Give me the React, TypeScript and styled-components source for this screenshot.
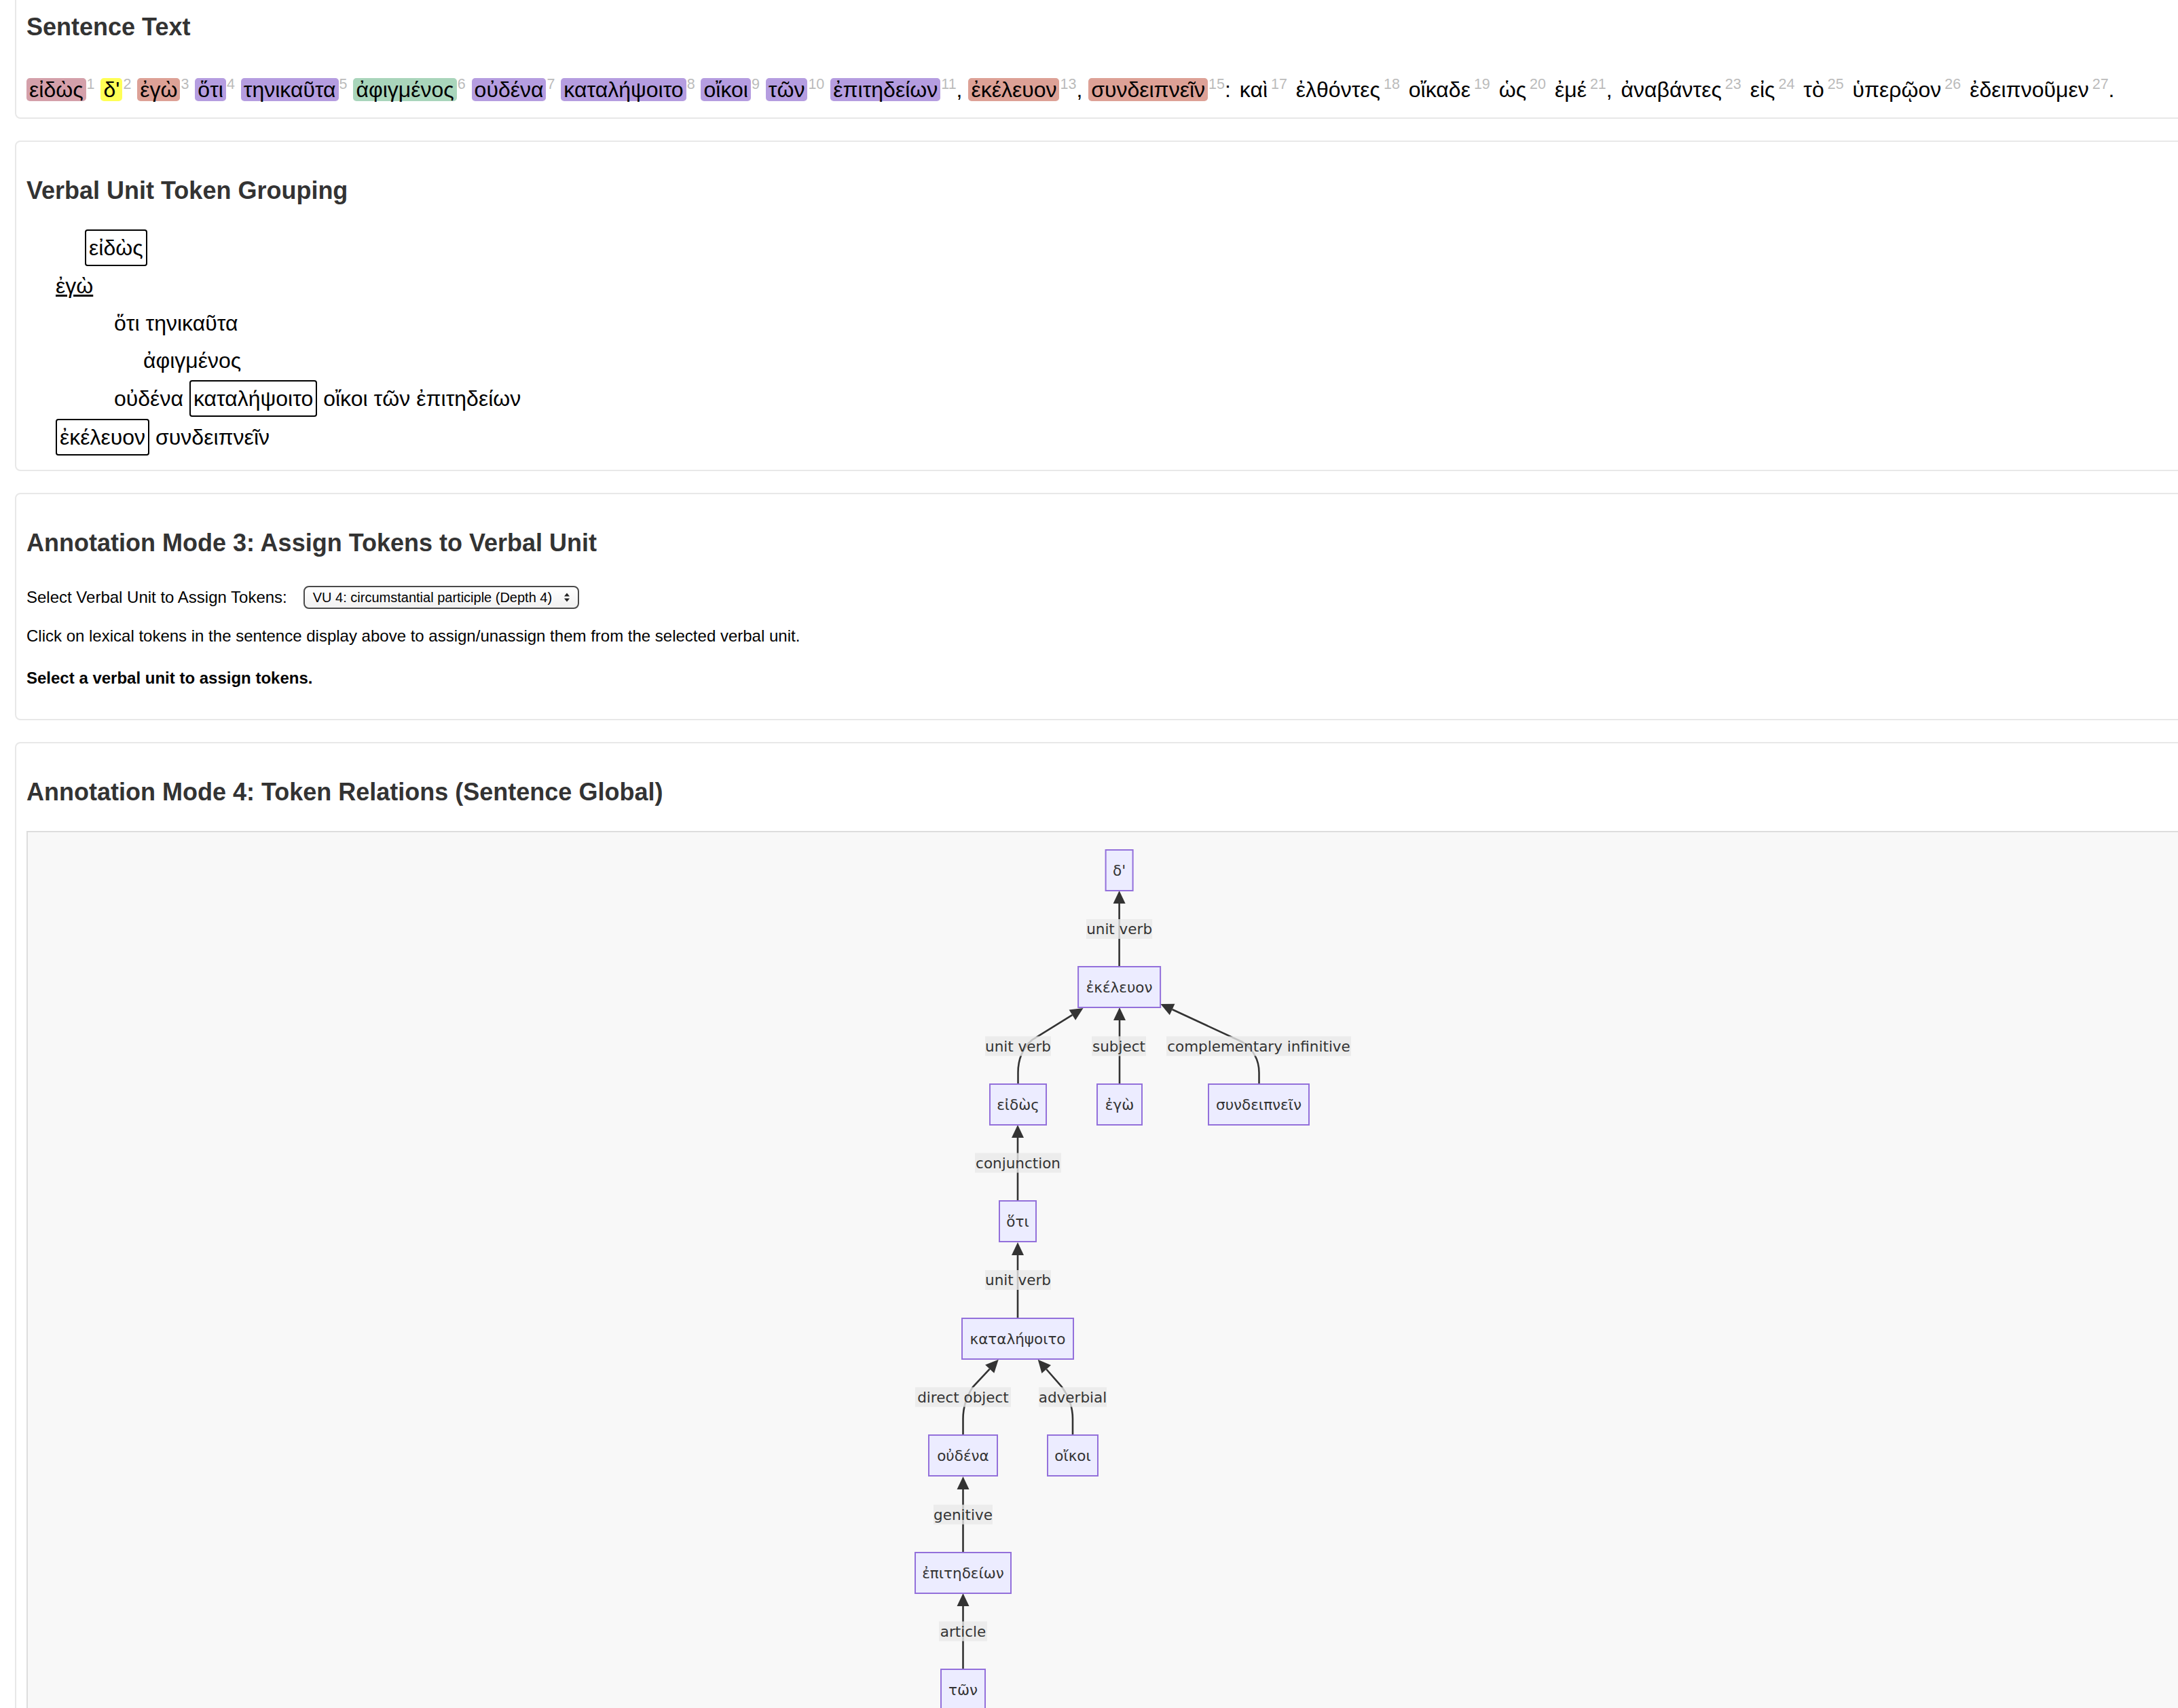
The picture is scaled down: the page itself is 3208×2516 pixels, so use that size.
import React from "react";
import styled, { createGlobalStyle } from "styled-components";

const GlobalStyle = createGlobalStyle`
  html, body {
    margin: 0;
    padding: 0;
    overflow: hidden;
    background: #ffffff;
  }
  body {
    font-family: "Liberation Sans", Arial, Helvetica, sans-serif;
    color: #000;
  }
`;

const Page = styled.div`
  width: 3338px;
  box-sizing: border-box;
  padding: 0 22px;
  margin-top: -34px;
`;

const Card = styled.section<{ $bottom?: number }>`
  background: #fff;
  border: 2px solid #e8e8e8;
  border-radius: 8px;
  padding: 15px 15px ${(p) => p.$bottom ?? 16}px;
  margin-bottom: 32px;
`;

const SectionTitle = styled.h3`
  font-size: 36px;
  font-weight: bold;
  color: #333;
  margin: 36px 0;
`;

const TokenLine = styled.div`
  padding-top: 8px;
  font-size: 32px;
  line-height: 54px;
`;

const Token = styled.span<{ $bg?: string }>`
  display: inline-block;
  padding: 2px 4px;
  line-height: 30px;
  border-radius: 5px;
  background: ${(p) => p.$bg ?? "transparent"};
`;

const Idx = styled.sup`
  font-size: 21.5px;
  line-height: 0;
  color: #bbb;
  vertical-align: super;
  margin-left: 1px;
`;

const GroupList = styled.div`
  font-size: 32px;
`;

const GroupLine = styled.div<{ $depth: number }>`
  display: flex;
  align-items: center;
  gap: 9px;
  min-height: 52px;
  margin-bottom: 3px;
  padding-left: ${(p) => p.$depth * 43}px;
  line-height: 36px;
`;

const Word = styled.span<{ $underline?: boolean }>`
  text-decoration: ${(p) => (p.$underline ? "underline" : "none")};
`;

const BoxedWord = styled.span`
  display: inline-block;
  border: 2px solid #000;
  border-radius: 4px;
  padding: 7px 4px;
  line-height: 36px;
`;

const FieldRow = styled.div`
  display: flex;
  align-items: center;
  gap: 24px;
  min-height: 46px;
  font-size: 24px;
`;

const SelectBox = styled.div`
  width: 406px;
  height: 34px;
  box-sizing: border-box;
  border: 2px solid #4a4a4a;
  border-radius: 8px;
  background: linear-gradient(#ffffff, #f1f1f1);
  font-size: 20px;
  padding: 0 11px 0 12px;
  display: flex;
  align-items: center;
  justify-content: space-between;
`;

const Hint = styled.p`
  font-size: 24px;
  margin: 20px 0 24px;
`;

const Status = styled.p`
  font-size: 24px;
  font-weight: bold;
  margin: 34px 0 30px;
`;

const DiagramBox = styled.div`
  margin-top: 2px;
  background: #f8f8f8;
  border: 2px solid #dddddd;
  padding-top: 16px;
  height: 1400px;
`;

const DiagramSvg = styled.svg`
  display: block;
  margin: 0 auto;
  font-family: "DejaVu Sans", Verdana, sans-serif;
  font-size: 21.5px;
`;

const LAV = "#b59de0";
const SAL = "#dda196";

type Tok = { t: string; n: number; bg?: string; after?: string };

const tokens: Tok[] = [
  { t: "εἰδὼς", n: 1, bg: "#d4a0aa" },
  { t: "δ'", n: 2, bg: "#ffff55" },
  { t: "ἐγὼ", n: 3, bg: SAL },
  { t: "ὅτι", n: 4, bg: LAV },
  { t: "τηνικαῦτα", n: 5, bg: LAV },
  { t: "ἀφιγμένος", n: 6, bg: "#a9d5bb" },
  { t: "οὐδένα", n: 7, bg: LAV },
  { t: "καταλήψοιτο", n: 8, bg: LAV },
  { t: "οἴκοι", n: 9, bg: LAV },
  { t: "τῶν", n: 10, bg: LAV },
  { t: "ἐπιτηδείων", n: 11, bg: LAV, after: "," },
  { t: "ἐκέλευον", n: 13, bg: SAL, after: "," },
  { t: "συνδειπνεῖν", n: 15, bg: SAL, after: ":" },
  { t: "καὶ", n: 17 },
  { t: "ἐλθόντες", n: 18 },
  { t: "οἴκαδε", n: 19 },
  { t: "ὡς", n: 20 },
  { t: "ἐμέ", n: 21, after: "," },
  { t: "ἀναβάντες", n: 23 },
  { t: "εἰς", n: 24 },
  { t: "τὸ", n: 25 },
  { t: "ὑπερῷον", n: 26 },
  { t: "ἐδειπνοῦμεν", n: 27, after: "." },
];

type Part = { t: string; box?: boolean; underline?: boolean };
const groups: { depth: number; parts: Part[] }[] = [
  { depth: 2, parts: [{ t: "εἰδὼς", box: true }] },
  { depth: 1, parts: [{ t: "ἐγὼ", underline: true }] },
  { depth: 3, parts: [{ t: "ὅτι" }, { t: "τηνικαῦτα" }] },
  { depth: 4, parts: [{ t: "ἀφιγμένος" }] },
  {
    depth: 3,
    parts: [
      { t: "οὐδένα" },
      { t: "καταλήψοιτο", box: true },
      { t: "οἴκοι" },
      { t: "τῶν" },
      { t: "ἐπιτηδείων" },
    ],
  },
  { depth: 1, parts: [{ t: "ἐκέλευον", box: true }, { t: "συνδειπνεῖν" }] },
];

// diagram geometry, in page pixels
const nodes = [
  { t: "δ'", cx: 1648.6, y: 1252, w: 40 },
  { t: "ἐκέλευον", cx: 1648.6, y: 1424, w: 121 },
  { t: "εἰδὼς", cx: 1499.5, y: 1597, w: 83 },
  { t: "ἐγὼ", cx: 1649, y: 1597, w: 66 },
  { t: "συνδειπνεῖν", cx: 1854, y: 1597, w: 148 },
  { t: "ὅτι", cx: 1499, y: 1769, w: 54 },
  { t: "καταλήψοιτο", cx: 1499, y: 1942, w: 164 },
  { t: "οὐδένα", cx: 1418.5, y: 2114, w: 101 },
  { t: "οἴκοι", cx: 1580, y: 2114, w: 74 },
  { t: "ἐπιτηδείων", cx: 1418.5, y: 2287, w: 141 },
  { t: "τῶν", cx: 1418.5, y: 2459, w: 65 },
];

type Edge = { d: string; from: [number, number]; tip: [number, number] };
const edges: Edge[] = [
  { d: "M1648.6 1424", from: [1648.6, 1424], tip: [1648.6, 1312] },
  {
    d: "M1499.5 1597 L1499.5 1580 Q1499.5 1550 1520 1532",
    from: [1520, 1532],
    tip: [1595.5, 1485],
  },
  { d: "M1649 1597", from: [1649, 1597], tip: [1649, 1484] },
  {
    d: "M1854.5 1597 L1854.5 1580 Q1854.5 1552 1830 1535",
    from: [1830, 1535],
    tip: [1709.4, 1479],
  },
  { d: "M1499 1769", from: [1499, 1769], tip: [1499, 1657] },
  { d: "M1499 1942", from: [1499, 1942], tip: [1499, 1830] },
  {
    d: "M1418.5 2114 L1418.5 2090 Q1418.5 2065 1433 2043",
    from: [1433, 2043],
    tip: [1470.7, 2002.7],
  },
  {
    d: "M1580 2114 L1580 2090 Q1580 2065 1564 2043",
    from: [1564, 2043],
    tip: [1528.7, 2002.7],
  },
  { d: "M1418.5 2287", from: [1418.5, 2287], tip: [1418.5, 2175] },
  { d: "M1418.5 2459", from: [1418.5, 2459], tip: [1418.5, 2347] },
];

const labels = [
  { t: "unit verb", cx: 1648.6, cy: 1368.5, w: 97 },
  { t: "unit verb", cx: 1499.5, cy: 1541, w: 97 },
  { t: "subject", cx: 1648, cy: 1541, w: 80 },
  { t: "complementary infinitive", cx: 1854, cy: 1541, w: 272 },
  { t: "conjunction", cx: 1499.5, cy: 1713, w: 127 },
  { t: "unit verb", cx: 1499.5, cy: 1885.5, w: 97 },
  { t: "direct object", cx: 1418.5, cy: 2058, w: 141 },
  { t: "adverbial", cx: 1580, cy: 2058, w: 100 },
  { t: "genitive", cx: 1418.5, cy: 2231, w: 87 },
  { t: "article", cx: 1418.5, cy: 2403, w: 71 },
];

const arrowParts = (e: Edge) => {
  const [fx, fy] = e.from;
  const [tx, ty] = e.tip;
  const len = Math.hypot(tx - fx, ty - fy);
  const ux = (tx - fx) / len;
  const uy = (ty - fy) / len;
  const bx = tx - ux * 19;
  const by = ty - uy * 19;
  const px = -uy * 9;
  const py = ux * 9;
  return {
    path: `${e.d} L${bx} ${by}`,
    head: `${tx},${ty} ${bx + px},${by + py} ${bx - px},${by - py}`,
  };
};

const RelationsDiagram = () => (
  <DiagramSvg width={680} height={1320}>
    <g transform="translate(-1329 -1242)">
      {edges.map((e, i) => {
        const a = arrowParts(e);
        return (
          <g key={i}>
            <path d={a.path} fill="none" stroke="#333" strokeWidth={2.6} />
            <polygon points={a.head} fill="#333" />
          </g>
        );
      })}
      {labels.map((l, i) => (
        <g key={i}>
          <rect
            x={l.cx - l.w / 2}
            y={l.cy - 14.5}
            width={l.w}
            height={29}
            fill="rgba(232,232,232,0.8)"
          />
          <text x={l.cx} y={l.cy} textAnchor="middle" dominantBaseline="central" fill="#333">
            {l.t}
          </text>
        </g>
      ))}
      {nodes.map((n, i) => (
        <g key={i}>
          <rect
            x={n.cx - n.w / 2}
            y={n.y}
            width={n.w}
            height={60}
            fill="#ECECFF"
            stroke="#9370DB"
            strokeWidth={2}
          />
          <text x={n.cx} y={n.y + 30} textAnchor="middle" dominantBaseline="central" fill="#333">
            {n.t}
          </text>
        </g>
      ))}
    </g>
  </DiagramSvg>
);

const UpDown = () => (
  <svg width="10" height="16" viewBox="0 0 10 16">
    <polygon points="1,6.5 5,1.5 9,6.5" fill="#222" />
    <polygon points="1,9.5 5,14.5 9,9.5" fill="#222" />
  </svg>
);

export default function App() {
  return (
    <>
      <GlobalStyle />
      <Page>
        <Card $bottom={14}>
          <SectionTitle>Sentence Text</SectionTitle>
          <TokenLine>
            {tokens.map((tk, i) => (
              <React.Fragment key={i}>
                <Token $bg={tk.bg}>{tk.t}</Token>
                <Idx>{tk.n}</Idx>
                {tk.after ?? ""}
                {i < tokens.length - 1 ? " " : ""}
              </React.Fragment>
            ))}
          </TokenLine>
        </Card>

        <Card $bottom={18}>
          <SectionTitle>Verbal Unit Token Grouping</SectionTitle>
          <GroupList>
            {groups.map((g, i) => (
              <GroupLine key={i} $depth={g.depth}>
                {g.parts.map((p, j) =>
                  p.box ? (
                    <BoxedWord key={j}>{p.t}</BoxedWord>
                  ) : (
                    <Word key={j} $underline={p.underline}>
                      {p.t}
                    </Word>
                  )
                )}
              </GroupLine>
            ))}
          </GroupList>
        </Card>

        <Card>
          <SectionTitle>Annotation Mode 3: Assign Tokens to Verbal Unit</SectionTitle>
          <FieldRow>
            <span>Select Verbal Unit to Assign Tokens:</span>
            <SelectBox>
              <span>VU 4: circumstantial participle (Depth 4)</span>
              <UpDown />
            </SelectBox>
          </FieldRow>
          <Hint>
            Click on lexical tokens in the sentence display above to assign/unassign them from the
            selected verbal unit.
          </Hint>
          <Status>Select a verbal unit to assign tokens.</Status>
        </Card>

        <Card>
          <SectionTitle>Annotation Mode 4: Token Relations (Sentence Global)</SectionTitle>
          <DiagramBox>
            <RelationsDiagram />
          </DiagramBox>
        </Card>
      </Page>
    </>
  );
}
